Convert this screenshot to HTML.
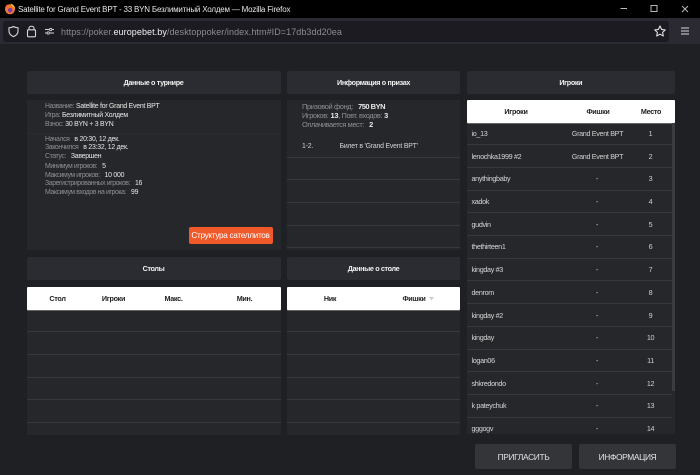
<!DOCTYPE html>
<html><head><meta charset="utf-8">
<style>
html,body{margin:0;padding:0;background:#1f2023}
body{width:700px;height:475px;overflow:hidden;position:relative;font-family:"Liberation Sans","Noto Sans CJK SC",sans-serif;color:#e4e4e4}
.a{position:absolute;white-space:nowrap}
.hd{position:absolute;background:#2a2c31;border-radius:2px;height:23px;line-height:23px;text-align:center;color:#f0f0f0;font-size:7.2px;font-weight:bold;letter-spacing:-.35px}
.bd{position:absolute;background:#26272b}
.wh{position:absolute;background:#fff;height:23px;border-radius:1px;box-shadow:0 1px 0 #666}
.th{position:absolute;top:0;line-height:23px;color:#222;font-size:7.2px;font-weight:bold;letter-spacing:-.3px;white-space:nowrap;transform:translateX(-50%)}
.ln{position:absolute;height:1px;background:#36383c}
.t{position:absolute;white-space:nowrap;font-size:6.9px;line-height:9px}
.g{color:#8e8f92;letter-spacing:-.4px}.w{color:#e8e8e8;letter-spacing:-.24px}
.c{position:absolute;white-space:nowrap;font-size:7.2px;letter-spacing:-.33px;line-height:10px;color:#d0d0d0;transform:translateX(-50%)}
.n{position:absolute;left:471.5px;white-space:nowrap;font-size:7.2px;letter-spacing:-.33px;line-height:10px;color:#d6d6d6}
.btn{position:absolute;top:444px;height:25px;width:97px;background:#333539;border-radius:2px;text-align:center;line-height:26px;font-size:8.4px;letter-spacing:-.35px;color:#e2e2e2}
</style></head><body>
<!-- title bar -->
<div class="a" style="left:0;top:0;width:700px;height:18px;background:#000"></div>
<svg class="a" style="left:4px;top:3px" width="12" height="12" viewBox="0 0 12 12"><circle cx="6" cy="6.3" r="5" fill="#f2792a"/><circle cx="6.2" cy="7.2" r="2.3" fill="#7a3fb0"/><path d="M6.5 .6C9 1.2 11.4 3.2 11.2 6.6 10.6 4.8 9.5 3.8 8.2 3.5 7.8 2.4 7.2 1.4 6.5 .6Z" fill="#ffc22e"/><path d="M1 5C1.4 3.4 2.4 2 3.4 1.4L3.8 3.6 2 5.6Z" fill="#ff5a3c"/></svg>
<div class="a" style="left:18px;top:4px;font-size:8px;letter-spacing:-.2px;line-height:11px;color:#e6e6e6">Satellite for Grand Event BPT - 33 BYN Безлимитный Холдем — Mozilla Firefox</div>
<svg class="a" style="left:620px;top:0" width="80" height="18" viewBox="0 0 80 18" fill="none" stroke="#b9b9b9" stroke-width="1"><path d="M.5 8.5H7"/><rect x="31" y="5.5" width="6" height="6"/><path d="M62 6L68 12M68 6L62 12"/></svg>
<!-- toolbar -->
<div class="a" style="left:0;top:18px;width:700px;height:26px;background:#2b2a33"></div>
<div class="a" style="left:3px;top:21px;width:666px;height:21px;background:#1c1b22;border-radius:3px"></div>
<svg class="a" style="left:8px;top:25px" width="50" height="13" viewBox="0 0 50 13" fill="none" stroke="#d8d8d8" stroke-width="1.1"><path d="M5.5 1.5C4 2.5 2.5 2.6 1 2.8V6.2C1 8.8 3.2 10.6 5.5 11.6 7.8 10.6 10 8.8 10 6.2V2.8C8.5 2.6 7 2.5 5.5 1.5Z"/><rect x="19.5" y="4.8" width="8" height="7" rx="1" fill="#1c1b22"/><path d="M21 4.8V3.2C21 .6 26 .6 26 3.2V4.8"/><path d="M37 4.5H41M44.5 4.5H46M37 8H38.5M42 8H46" stroke-width="1"/><circle cx="42.7" cy="4.5" r="1.2" stroke-width=".9"/><circle cx="40.2" cy="8" r="1.2" stroke-width=".9"/></svg>
<div class="a" style="left:61px;top:26px;font-size:9px;line-height:12px;color:#8c8c92;letter-spacing:.07px">https://poker.<span style="color:#f2f2f2">europebet.by</span>/desktoppoker/index.htm#ID=17db3dd20ea</div>
<svg class="a" style="left:653px;top:24px" width="14" height="14" viewBox="0 0 14 14" fill="none" stroke="#e0e0e0" stroke-width="1.1"><path d="M7 2L8.6 5.4 12.3 5.9 9.6 8.4 10.3 12 7 10.2 3.7 12 4.4 8.4 1.7 5.9 5.4 5.4Z" stroke-linejoin="round"/></svg>
<svg class="a" style="left:680px;top:26px" width="10" height="10" viewBox="0 0 10 10" stroke="#d8d8d8" stroke-width="1.1"><path d="M1 2H9M1 5H9M1 8H9"/></svg>

<!-- headers -->
<div class="hd" style="left:26.5px;top:71px;width:254px">Данные о турнире</div>
<div class="hd" style="left:287px;top:71px;width:173px">Информация о призах</div>
<div class="hd" style="left:467px;top:71px;width:207.5px">Игроки</div>
<div class="hd" style="left:26.5px;top:257px;width:254px">Столы</div>
<div class="hd" style="left:287px;top:257px;width:173px">Данные о столе</div>

<!-- tournament panel -->
<div class="bd" style="left:26.5px;top:100px;width:254px;height:150px"></div>
<div class="ln" style="left:26.5px;top:132.5px;width:254px;background:#2b2c30"></div>
<div class="t" style="left:45px;top:102px"><span class="g">Название:</span> <span class="w">Satellite for Grand Event BPT</span></div>
<div class="t" style="left:45px;top:111px"><span class="g">Игра:</span> <span class="w">Безлимитный Холдем</span></div>
<div class="t" style="left:45px;top:119.5px"><span class="g">Взнос:</span> <span class="w">30 BYN + 3 BYN</span></div>
<div class="t" style="left:45px;top:134.5px"><span class="g">Начался</span> <span class="w" style="margin-left:3px">в 20:30, 12 дек.</span></div>
<div class="t" style="left:45px;top:143px"><span class="g">Закончился</span> <span class="w" style="margin-left:3px">в 23:32, 12 дек.</span></div>
<div class="t" style="left:45px;top:152px"><span class="g">Статус:</span> <span class="w" style="margin-left:3px">Завершен</span></div>
<div class="t" style="left:45px;top:161.5px"><span class="g">Минимум игроков:</span> <span class="w" style="margin-left:3px">5</span></div>
<div class="t" style="left:45px;top:170.5px"><span class="g">Максимум игроков:</span> <span class="w" style="margin-left:3px">10 000</span></div>
<div class="t" style="left:45px;top:179px"><span class="g">Зарегистрированных игроков:</span> <span class="w" style="margin-left:3px">16</span></div>
<div class="t" style="left:45px;top:188px"><span class="g">Максимум входов на игрока:</span> <span class="w" style="margin-left:3px">99</span></div>
<div class="a" style="left:188.5px;top:227px;width:84px;height:17px;background:#f0592a;border-radius:2px;text-align:center;line-height:17px;font-size:8.2px;letter-spacing:-.3px;color:#fff">Структура сателлитов</div>

<!-- prize panel -->
<div class="bd" style="left:287px;top:100px;width:173px;height:150px"></div>
<div class="t" style="left:302px;top:102px;font-size:7.5px"><span class="g">Призовой фонд:</span> <span class="w" style="margin-left:3px;font-weight:bold;letter-spacing:-.5px">750 BYN</span></div>
<div class="t" style="left:302px;top:111px;font-size:7.4px"><span class="g">Игроков:</span> <span class="w" style="font-weight:bold">13</span><span class="g">, Повт. входов:</span> <span class="w" style="font-weight:bold">3</span></div>
<div class="t" style="left:302px;top:119.5px;font-size:7.4px"><span class="g">Оплачивается мест:</span> <span class="w" style="margin-left:3px;font-weight:bold">2</span></div>
<div class="t" style="left:302px;top:142px;color:#d6d6d6;letter-spacing:-.2px">1-2.</div>
<div class="t" style="left:339.5px;top:142px;color:#d6d6d6;letter-spacing:-.2px">Билет в 'Grand Event BPT'</div>
<div class="ln" style="left:287px;top:157px;width:173px"></div>
<div class="ln" style="left:287px;top:179px;width:173px"></div>
<div class="ln" style="left:287px;top:202px;width:173px"></div>
<div class="ln" style="left:287px;top:225px;width:173px"></div>
<div class="ln" style="left:287px;top:247px;width:173px"></div>

<!-- tables panel -->
<div class="bd" style="left:26.5px;top:287px;width:254px;height:148px"></div>
<div class="wh" style="left:26.5px;top:287px;width:254px">
<span class="th" style="left:31px">Стол</span><span class="th" style="left:87px">Игроки</span><span class="th" style="left:147px">Макс.</span><span class="th" style="left:218px">Мин.</span></div>
<div class="ln" style="left:26.5px;top:331px;width:254px"></div>
<div class="ln" style="left:26.5px;top:354px;width:254px"></div>
<div class="ln" style="left:26.5px;top:377px;width:254px"></div>
<div class="ln" style="left:26.5px;top:399px;width:254px"></div>
<div class="ln" style="left:26.5px;top:422px;width:254px"></div>

<!-- table data panel -->
<div class="bd" style="left:287px;top:287px;width:173px;height:148px"></div>
<div class="wh" style="left:287px;top:287px;width:173px">
<span class="th" style="left:43px">Ник</span><span class="th" style="left:127px">Фишки</span>
<svg style="position:absolute;left:142px;top:10px" width="5" height="4"><path d="M0 0H5L2.5 3.5Z" fill="#ccc"/></svg></div>
<div class="ln" style="left:287px;top:331px;width:173px"></div>
<div class="ln" style="left:287px;top:354px;width:173px"></div>
<div class="ln" style="left:287px;top:377px;width:173px"></div>
<div class="ln" style="left:287px;top:399px;width:173px"></div>
<div class="ln" style="left:287px;top:422px;width:173px"></div>

<!-- players panel -->
<div class="bd" style="left:467px;top:100px;width:207.5px;height:334px"></div>
<div class="wh" style="left:467px;top:100px;width:208px">
<span class="th" style="left:49px">Игроки</span><span class="th" style="left:131px">Фишки</span><span class="th" style="left:184px">Место</span></div>
<div class="a" style="left:672px;top:123px;width:2.5px;height:268px;background:#3a3c40"></div>
<div class="ln" style="left:467px;top:144px;width:205px"></div>
<div class="ln" style="left:467px;top:167px;width:205px"></div>
<div class="ln" style="left:467px;top:190px;width:205px"></div>
<div class="ln" style="left:467px;top:212px;width:205px"></div>
<div class="ln" style="left:467px;top:235px;width:205px"></div>
<div class="ln" style="left:467px;top:258px;width:205px"></div>
<div class="ln" style="left:467px;top:280px;width:205px"></div>
<div class="ln" style="left:467px;top:303px;width:205px"></div>
<div class="ln" style="left:467px;top:326px;width:205px"></div>
<div class="ln" style="left:467px;top:349px;width:205px"></div>
<div class="ln" style="left:467px;top:371px;width:205px"></div>
<div class="ln" style="left:467px;top:394px;width:205px"></div>
<div class="ln" style="left:467px;top:417px;width:205px"></div>

<div class="n" style="top:129px">io_13</div><div class="c" style="left:597.5px;top:129px">Grand Event BPT</div><div class="c" style="left:650.5px;top:129px">1</div>
<div class="n" style="top:152px">lenochka1999 #2</div><div class="c" style="left:597.5px;top:152px">Grand Event BPT</div><div class="c" style="left:650.5px;top:152px">2</div>
<div class="n" style="top:174px">anythingbaby</div><div class="c" style="left:597px;top:174px">-</div><div class="c" style="left:650.5px;top:174px">3</div>
<div class="n" style="top:197px">xadok</div><div class="c" style="left:597px;top:197px">-</div><div class="c" style="left:650.5px;top:197px">4</div>
<div class="n" style="top:220px">gudvin</div><div class="c" style="left:597px;top:220px">-</div><div class="c" style="left:650.5px;top:220px">5</div>
<div class="n" style="top:242px">thethirteen1</div><div class="c" style="left:597px;top:242px">-</div><div class="c" style="left:650.5px;top:242px">6</div>
<div class="n" style="top:265px">kingday #3</div><div class="c" style="left:597px;top:265px">-</div><div class="c" style="left:650.5px;top:265px">7</div>
<div class="n" style="top:288px">denrom</div><div class="c" style="left:597px;top:288px">-</div><div class="c" style="left:650.5px;top:288px">8</div>
<div class="n" style="top:311px">kingday #2</div><div class="c" style="left:597px;top:311px">-</div><div class="c" style="left:650.5px;top:311px">9</div>
<div class="n" style="top:333px">kingday</div><div class="c" style="left:597px;top:333px">-</div><div class="c" style="left:650.5px;top:333px">10</div>
<div class="n" style="top:356px">logan06</div><div class="c" style="left:597px;top:356px">-</div><div class="c" style="left:650.5px;top:356px">11</div>
<div class="n" style="top:379px">shkredondo</div><div class="c" style="left:597px;top:379px">-</div><div class="c" style="left:650.5px;top:379px">12</div>
<div class="n" style="top:401px">k pateychuk</div><div class="c" style="left:597px;top:401px">-</div><div class="c" style="left:650.5px;top:401px">13</div>
<div class="n" style="top:424px">gggogv</div><div class="c" style="left:597px;top:424px">-</div><div class="c" style="left:650.5px;top:424px">14</div>

<!-- buttons -->
<div class="btn" style="left:475px">ПРИГЛАСИТЬ</div>
<div class="btn" style="left:579px">ИНФОРМАЦИЯ</div>
</body></html>
